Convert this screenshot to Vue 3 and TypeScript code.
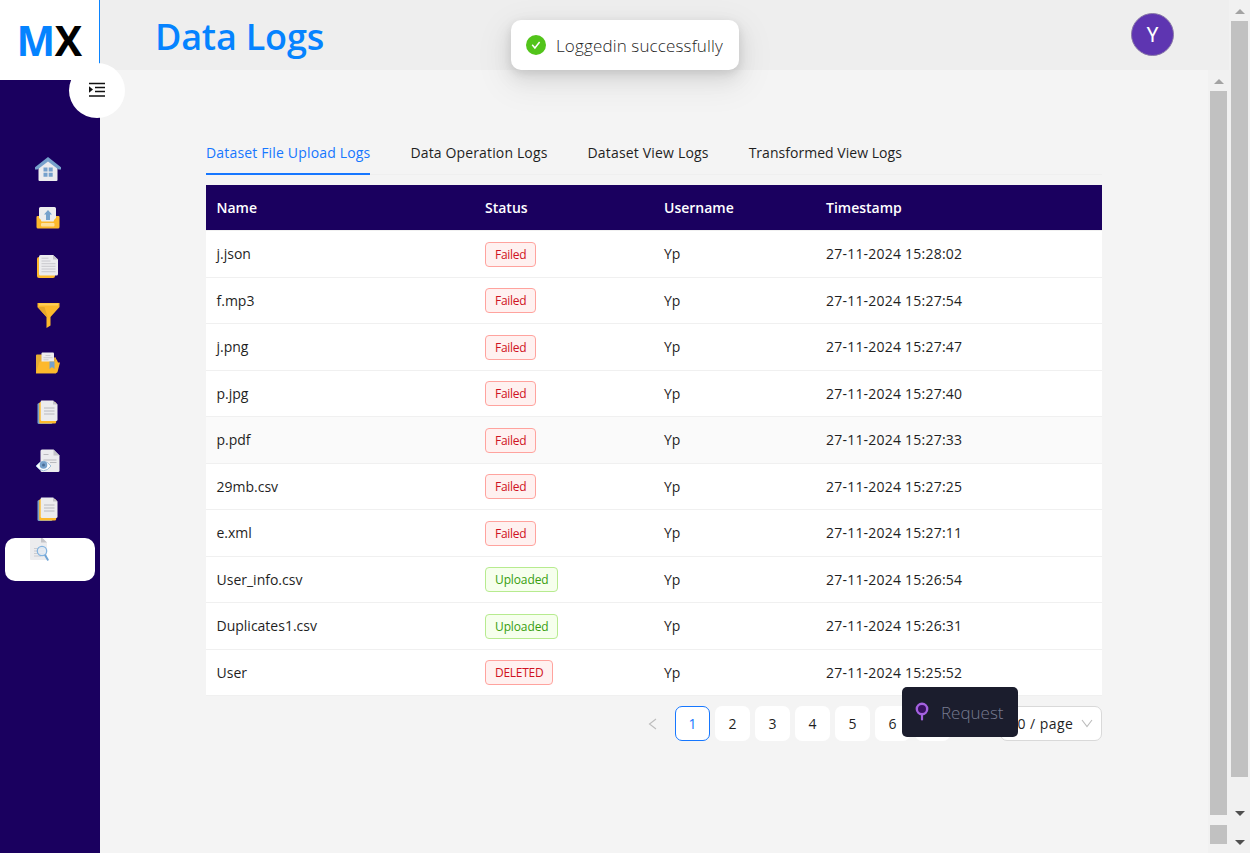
<script setup lang="ts">
import { ref } from 'vue'

interface LogRow {
  name: string
  status: string
  time: string
}

const tabs = [
  { label: 'Dataset File Upload Logs', cls: 't1' },
  { label: 'Data Operation Logs', cls: 't2' },
  { label: 'Dataset View Logs', cls: 't3' },
  { label: 'Transformed View Logs', cls: 't4' },
]
const activeTab = ref(0)

const rows: LogRow[] = [
  { name: 'j.json', status: 'Failed', time: '27-11-2024 15:28:02' },
  { name: 'f.mp3', status: 'Failed', time: '27-11-2024 15:27:54' },
  { name: 'j.png', status: 'Failed', time: '27-11-2024 15:27:47' },
  { name: 'p.jpg', status: 'Failed', time: '27-11-2024 15:27:40' },
  { name: 'p.pdf', status: 'Failed', time: '27-11-2024 15:27:33' },
  { name: '29mb.csv', status: 'Failed', time: '27-11-2024 15:27:25' },
  { name: 'e.xml', status: 'Failed', time: '27-11-2024 15:27:11' },
  { name: 'User_info.csv', status: 'Uploaded', time: '27-11-2024 15:26:54' },
  { name: 'Duplicates1.csv', status: 'Uploaded', time: '27-11-2024 15:26:31' },
  { name: 'User', status: 'DELETED', time: '27-11-2024 15:25:52' },
]
const pages = [1, 2, 3, 4, 5, 6, 7]
const page = ref(1)
</script>

<template>
  <div class="app">
    <aside class="side">
      <div class="logo"><span class="m">M</span><span class="x">X</span></div>
      <button class="toggle" aria-label="Expand menu">
        <svg width="18" height="16" viewBox="0 0 18 16">
          <path d="M1 1.500h16M7 5.500h10M7 9.500h10M1 14h16" stroke="#111" stroke-width="1.500" />
          <path d="M1 4.300v6.400l4-3.200z" fill="#111" />
        </svg>
      </button>
      <nav class="nav">
        <svg viewBox="0 0 26 26">
          <path d="M3.500 11 13 3l9.500 8v13a1 1 0 0 1-1 1h-17a1 1 0 0 1-1-1z" fill="#ececee" />
          <path d="M13 1 0 11.200v2.300h2.500L13 5.500l10.500 8H26v-2.300z" fill="#76a1cc" />
          <path d="M8.500 11.500h4v4h-4zM13.700 11.500h4v4h-4zM8.500 16.700h4v4h-4zM13.700 16.700h4v4h-4z" fill="#76a1cc" />
        </svg>
        <svg viewBox="0 0 26 26">
          <path d="M1.500 13q0-1 1-1h21q1 0 1 1v10q0 1.500-1.500 1.500H3q-1.500 0-1.500-1.500z" fill="#fdb92c" />
          <path d="M4 4.500Q4 3 5.500 3h14Q21 3 21 4.500V14q-2 1-2.500 3.500h-12Q6 15 4 14z" fill="#ececee" />
          <path d="m13 6 4 4.500h-2V16h-4v-5.500H9z" fill="#76a1cc" />
          <rect x="6" y="19" width="13.500" height="3.500" rx="1" fill="#fee09a" />
        </svg>
        <svg viewBox="0 0 26 26">
          <rect x="2" y="4" width="18" height="21" rx="2" fill="#fdb92c" />
          <path d="M4 3.500Q4 2 5.500 2H18l5 4.500v14.500q0 1.500-1.500 1.500h-16Q4 22.500 4 21z" fill="#ececee" />
          <path d="M18 2v4.500h5z" fill="#c4c4c8" />
          <path d="M6.500 5.200h7M6.500 8h9M6.500 10.700h14M6.500 13.300h14M6.500 16h14M6.500 18.700h14" stroke="#c4c4c8" stroke-width=".9" />
        </svg>
        <svg viewBox="0 0 26 26">
          <path d="M2.500 1h22v4l-9 10v8.500L11.500 26V15l-9-10z" fill="#fdb92c" />
          <path d="M4 1.500h19v2H4z" fill="#ffd05a" />
          <path d="M2.500 5h7l3 10h-1z" fill="#e6a72b" />
        </svg>
        <svg viewBox="0 0 26 26">
          <path d="M1 5.500q0-1 1-1h7l2 3h10v16H1z" fill="#e6ac35" />
          <path d="M6.500 3.500q0-1 1-1h10.500q1 0 1 1v14H6.500z" fill="#ececee" />
          <path d="M10.500 5.500h5M8.500 7.700h9M8.500 9.800h5" stroke="#c4c4c8" stroke-width=".8" />
          <path d="M4.500 11.500h15.500l1.500-2.500 1.500 3.500h2l-2.500 9.500q-.3 1-1.500 1H1z" fill="#fdb92c" />
          <path d="M14.500 11.500h5v7.500l-2.500-2-2.500 2z" fill="#76a1cc" />
        </svg>
        <svg viewBox="0 0 26 26">
          <rect x="2.500" y="4" width="15" height="21" rx="1.500" fill="#76a1cc" />
          <rect x="4.200" y="3" width="17" height="21.500" rx="1.500" fill="#fdb92c" />
          <path d="M5.700 2.500q0-1 1-1H18l4.500 4v15q0 1.500-1.500 1.500H7q-1.300 0-1.300-1.500z" fill="#ececee" />
          <path d="M18 1.500v4h4.500z" fill="#c4c4c8" />
          <path d="M9 9h10.500M9 12h10.500M9 15h10.500" stroke="#b4b4b8" stroke-width=".9" />
        </svg>
        <svg viewBox="0 0 26 26">
          <path d="M5.500 3q0-1.500 1.500-1.500h11.500l6 6V22.500q0 1.500-1.500 1.500H7q-1.500 0-1.500-1.500z" fill="#ececee" />
          <path d="M18.500 1.500v6h6z" fill="#c4c4c8" />
          <path d="M8.500 6.500h5M8.500 12h13M15 14.500h6.500" stroke="#b4b4b8" stroke-width=".9" />
          <path d="M1 18q7.500-9.500 15 0-7.500 9.500-15 0z" fill="#fff" stroke="#9dbdd9" stroke-width="1" />
          <circle cx="8.500" cy="17" r="3.800" fill="#76a1cc" />
          <circle cx="8.500" cy="17" r="1.500" fill="#4c6f98" />
        </svg>
        <svg viewBox="0 0 26 26">
          <rect x="2.500" y="4" width="15" height="21" rx="1.500" fill="#76a1cc" />
          <rect x="4.200" y="3" width="17" height="21.500" rx="1.500" fill="#fdb92c" />
          <path d="M5.700 2.500q0-1 1-1H18l4.500 4v15q0 1.500-1.500 1.500H7q-1.300 0-1.300-1.500z" fill="#ececee" />
          <path d="M18 1.500v4h4.500z" fill="#c4c4c8" />
          <path d="M9 9h10.500M9 12h10.500M9 15h10.500" stroke="#b4b4b8" stroke-width=".9" />
        </svg>
      </nav>
      <div class="current">
        <svg width="22" height="24" viewBox="0 0 22 24">
          <path d="M0 0h11.500l5.500 4.500V21q0 1-1 1H1q-1 0-1-1z" fill="#ececee" />
          <path d="M11 0v4.500h6L12.500 0z" fill="#c4c4c8" />
          <path d="M4 10.500h10M4 13h10M4 15.500h10M4 18h7" stroke="#c4c4c8" stroke-width=".8" />
          <circle cx="12" cy="13" r="4.700" fill="#e4ebf3" fill-opacity=".85" stroke="#83b4e0" stroke-width="1.300" />
          <path d="m15.300 17.500 2.500 4.200" stroke="#6fa4d6" stroke-width="2" stroke-linecap="round" />
        </svg>
      </div>
    </aside>

    <section class="frame">
      <header class="head">
        <h1>Data Logs</h1>
        <div class="avatar">Y</div>
      </header>
      <div class="body">
        <main class="main">
          <div class="tabs">
            <button
              v-for="(t, i) in tabs"
              :key="t.label"
              :class="['tab', t.cls, { on: i === activeTab }]"
              @click="activeTab = i"
            >{{ t.label }}</button>
          </div>
          <div class="table">
            <div class="tr th"><span>Name</span><span>Status</span><span>Username</span><span>Timestamp</span></div>
            <div v-for="(r, i) in rows" :key="r.name" :class="['tr', { hover: i === 4 }]">
              <span>{{ r.name }}</span>
              <span><b :class="['tag', r.status.toLowerCase()]">{{ r.status }}</b></span>
              <span>Yp</span>
              <span class="time">{{ r.time }}</span>
            </div>
          </div>
          <div class="pager">
            <div class="arrow">
              <svg width="9" height="12" viewBox="0 0 9 12"><path d="M8 1 1.500 6 8 11" fill="none" stroke="#bcbcbc" stroke-width="1.100" /></svg>
            </div>
            <button v-for="p in pages" :key="p" :class="['pg', { on: p === page }]" @click="page = p">{{ p }}</button>
            <div class="size">
              <span>10 / page</span>
              <svg width="12" height="9" viewBox="0 0 12 9"><path d="m1 1 5 6.500L11 1" fill="none" stroke="#bcbcbc" stroke-width="1.100" /></svg>
            </div>
          </div>
        </main>
        <div class="bar inner">
          <i class="up"></i>
          <div class="thumb long"></div>
          <div class="thumb short"></div>
        </div>
      </div>
    </section>

    <div class="bar outer">
      <i class="up"></i>
      <div class="thumb"></div>
      <i class="down first"></i>
      <i class="down"></i>
    </div>

    <div class="toast">
      <svg width="20" height="20" viewBox="0 0 20 20">
        <circle cx="10" cy="10" r="10" fill="#52c41a" />
        <path d="m6.200 9.800 2.700 3.200 4.700-6" fill="none" stroke="#fff" stroke-width="1.500" />
      </svg>
      <span>Loggedin successfully</span>
    </div>
    <div class="request">
      <svg width="14" height="20" viewBox="0 0 14 20">
        <path d="M7 12v5.500" stroke="#a461e0" stroke-width="2.200" stroke-linecap="round" />
        <circle cx="7" cy="7" r="5.200" fill="#38105f" stroke="#a461e0" stroke-width="2.400" />
      </svg>
      <span>Request</span>
    </div>
  </div>
</template>

<style>
body { margin: 0; overflow: hidden; }
</style>

<style scoped>
.app { position: relative; display: flex; width: 1250px; height: 853px; overflow: hidden; background: #f4f4f4; color: #1f1f1f; font: 14px "Open Sans", "Noto Sans", sans-serif; }
.app * { box-sizing: border-box; }
button { font: inherit; color: inherit; border: 0; background: none; padding: 0; }
.side { position: relative; z-index: 2; width: 100px; flex: none; background: #1a005f; }
.logo { display: flex; height: 80px; padding: 0 0 0 16.500px; align-items: center; background: #fff; border-right: 1px solid #0a84ff; font-size: 41px; font-weight: 700; }
.m { color: #0583ff; letter-spacing: -.5px; }
.x { color: #000; }
.toggle { position: absolute; left: 69px; top: 63px; display: flex; width: 56px; height: 55px; padding-bottom: 2px; align-items: center; justify-content: center; border-radius: 50%; background: #fff; }
.nav { display: flex; flex-direction: column; align-items: center; gap: 22.700px; padding: 75.500px 4px 0 0; }
.nav svg { width: 26px; height: 26px; display: block; }
.current { display: flex; width: 90px; height: 43px; margin: 15.600px 5px 0; padding-left: 25px; border-radius: 10px; background: #fff; }
.frame { display: flex; flex: 1; flex-direction: column; min-width: 0; }
.head { display: flex; height: 70px; flex: none; align-items: center; justify-content: space-between; padding: 0 55px 0 55px; background: #eee; }
h1 { margin: 3px 0 0; font-size: 36px; font-weight: 600; color: #0583ff; line-height: 48px; letter-spacing: -.2px; }
.avatar { width: 43px; height: 43px; margin-top: -1px; border: 1px solid #8a7aa8; border-radius: 50%; background: #5e35b1; color: #fff; font: 20px/42px Roboto, sans-serif; text-align: center; }
.body { display: flex; flex: 1; }
.main { width: 896px; margin: 64px 106px 0; }
.tabs { display: flex; gap: 40px; height: 41px; margin-bottom: 10px; border-bottom: 1px solid #efefef; }
.tab { height: 41px; padding-bottom: 2px; white-space: nowrap; border-bottom: 2px solid transparent; }
.t1 { letter-spacing: .17px; }
.t2 { letter-spacing: .14px; }
.t3 { letter-spacing: .18px; }
.t4 { letter-spacing: .03px; }
.tab.on { color: #1677ff; border-color: #1677ff; }
.table { background: #fff; }
.tr { display: grid; grid-template-columns: 268.500px 179px 162px 1fr; height: 46.500px; align-items: center; border-bottom: 1px solid #f0f0f0; }
.tr > span { padding-left: 10.500px; }
.th { height: 46px; background: #1a005f; color: #fff; font-weight: 600; }
.time { letter-spacing: .22px; }
.hover { background: #fafafa; }
.tag { display: inline-block; position: relative; top: .5px; height: 25px; padding: 0 9px; border: 1px solid #ffa39e; border-radius: 4px; background: #fff1f0; color: #cf1322; font-size: 12px; font-weight: 400; line-height: 24px; letter-spacing: -.27px; vertical-align: middle; }
.uploaded { border-color: #b7eb8f; background: #f6ffed; color: #389e0d; letter-spacing: -.12px; }
.pager { display: flex; gap: 5px; margin: 10px 0 0 429px; }
.arrow { display: flex; width: 35px; height: 35px; align-items: center; justify-content: center; }
.pg { width: 35px; height: 35px; border-radius: 7px; background: #fff; }
.pg.on { border: 1px solid #1677ff; color: #1677ff; }
.size { display: flex; width: 102px; height: 35px; margin-left: auto; align-items: center; justify-content: space-between; padding: 0 8px 0 8px; border: 1px solid #d9d9d9; border-radius: 7px; background: #fff; letter-spacing: .45px; }
.bar { flex: none; background: #f1f1f1; }
.inner { width: 21px; padding: 9px 0 0 2px; margin-left: auto; }
.thumb { width: 17px; background: #c1c1c1; }
.inner .thumb { margin-top: 7px; height: 724px; }
.inner .short { margin-top: 10px; height: 19px; }
.outer { width: 21px; padding: 9px 0 0 2px; }
.outer .thumb { margin-top: 7px; height: 756px; }
.up, .down { display: block; width: 0; height: 0; margin-left: 4px; border: 0 solid transparent; border-width: 0 5px; }
.up { border-bottom: 5px solid #a3a3a3; }
.down { margin-top: 24px; border-top: 5px solid #505050; }
.down.first { margin-top: 34px; }
.toast { position: absolute; z-index: 5; left: 511px; top: 20px; display: flex; width: 228px; height: 50px; align-items: center; gap: 10px; padding-left: 15px; border-radius: 10px; background: #fff; box-shadow: 0 8px 20px rgba(0,0,0,.09), 0 3px 8px rgba(0,0,0,.09), 0 11px 32px 9px rgba(0,0,0,.05); font-size: 17px; font-weight: 330; letter-spacing: .14px; white-space: nowrap; }
.request { position: absolute; z-index: 5; left: 902px; top: 687px; display: flex; width: 116px; height: 50px; align-items: center; gap: 12px; padding-left: 13px; border-radius: 5px; background: #1b1d2d; color: #777a90; font-size: 17px; font-weight: 330; }
</style>
